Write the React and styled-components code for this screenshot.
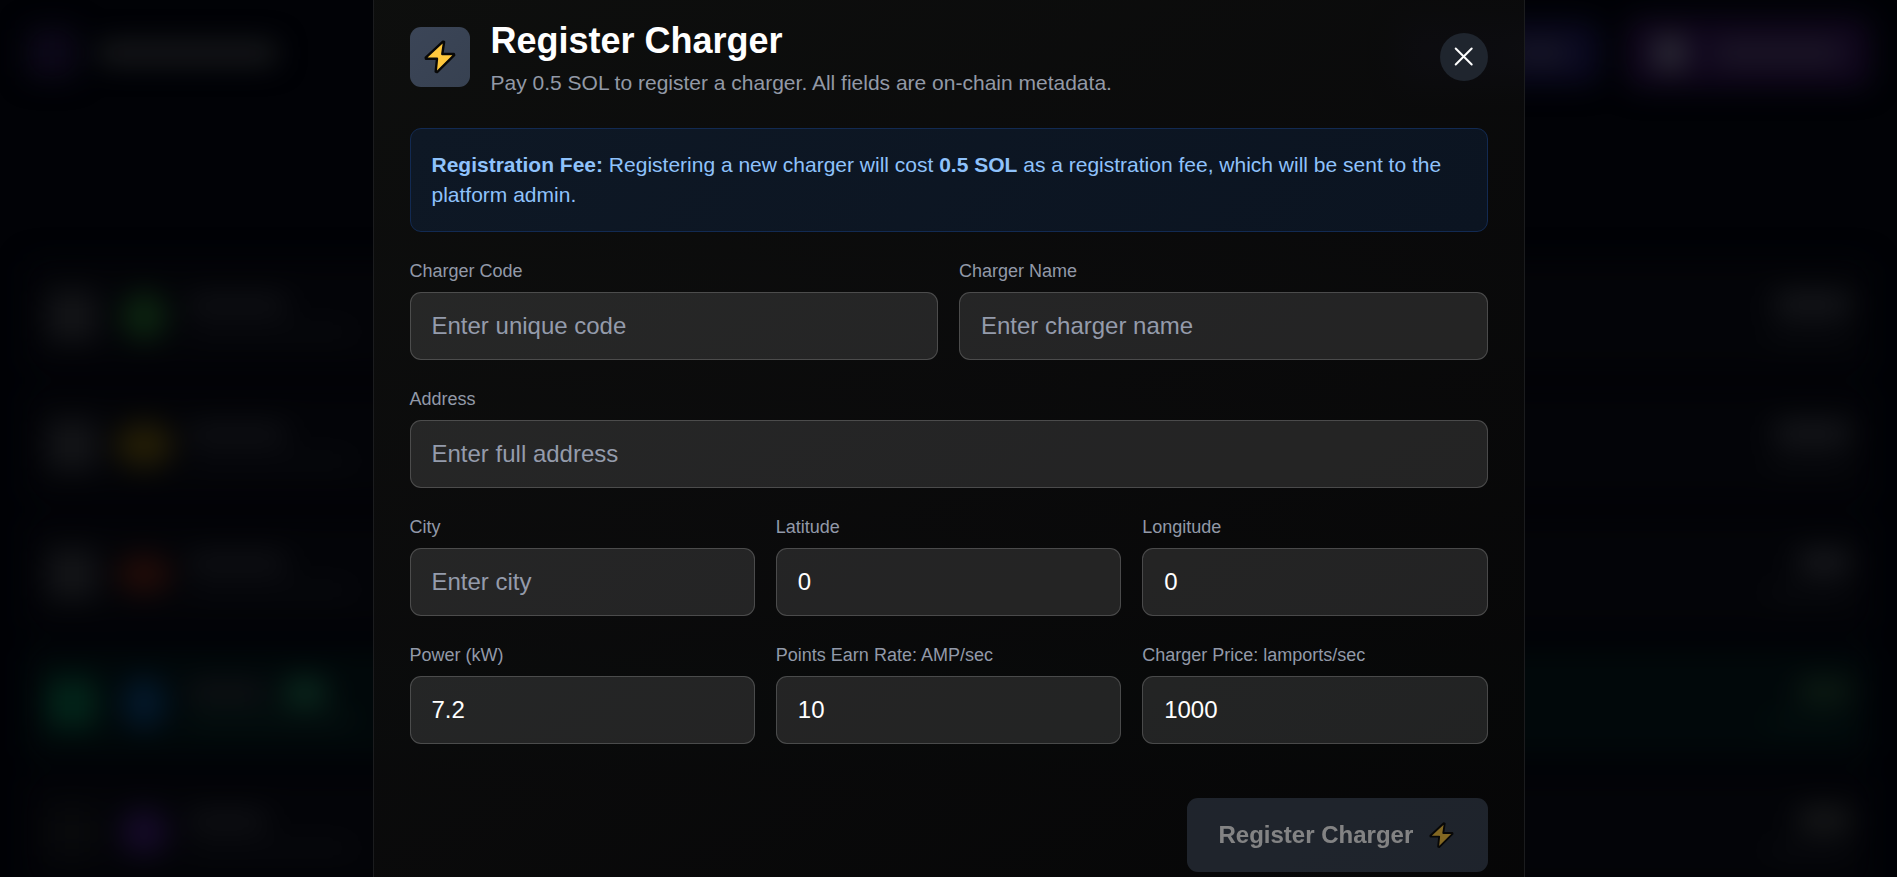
import React from "react";
import styled, { createGlobalStyle } from "styled-components";

const GlobalStyle = createGlobalStyle`
  * { box-sizing: border-box; }
  html, body { margin: 0; height: 100%; overflow: hidden; background: #010206; }
  body, input, button { font-family: "Liberation Sans", Arial, sans-serif; }
  #root { height: 100%; }
`;

const Screen = styled.div`
  display: grid;
  height: 877px;
  overflow: hidden;
  background: #010206;
  & > * { grid-area: 1 / 1; min-height: 0; }
`;

/* Dimmed leaderboard page behind the dialog */
const Backdrop = styled.div`
  display: flex;
  flex-direction: column;
  padding: 17px 27px 0;
  filter: blur(14px);
  overflow: hidden;
`;

const TopBar = styled.div`
  display: flex;
  align-items: center;
  height: 72px;
  flex: none;
  margin-bottom: 171px;
`;

const Blob = styled.div`
  flex: none;
  width: ${(p) => p.$w}px;
  height: ${(p) => p.$h}px;
  border-radius: ${(p) => p.$r ?? 8}px;
  background: ${(p) => p.$c};
  margin-left: ${(p) => p.$ml ?? 0}px;
`;

const AvatarSlot = styled.div`
  display: flex;
  justify-content: center;
  width: 58px;
  margin-left: 18px;
`;

const Spacer = styled.div`
  flex: 1;
`;

const GhostButton = styled.div`
  display: flex;
  align-items: center;
  justify-content: center;
  gap: 28px;
  width: ${(p) => p.$w}px;
  height: ${(p) => p.$h}px;
  margin-left: 26px;
  border-radius: 14px;
  background: ${(p) => p.$c};
`;

const BoardRow = styled.div`
  display: flex;
  align-items: center;
  flex: none;
  height: 112px;
  margin-bottom: 17px;
  padding: 0 20px;
  border-radius: 14px;
  background: ${(p) => p.$c};
`;

const Lines = styled.div`
  display: flex;
  flex-direction: column;
  align-items: ${(p) => (p.$end ? "flex-end" : "flex-start")};
  gap: 13px;
  margin-left: ${(p) => (p.$end ? 0 : 14)}px;
`;

const NameLine = styled.div`
  display: flex;
  align-items: center;
  height: 18px;
`;

/* Dialog */
const Dialog = styled.div`
  z-index: 1;
  justify-self: center;
  width: 1152px;
  height: 960px;
  padding: 13px 36px 0;
  border: solid #1b1c1e;
  border-width: 0 1px;
  background: linear-gradient(150deg, rgba(16, 17, 15, 0.84) 0%, rgba(12, 12, 12, 0.84) 45%, rgba(6, 6, 6, 0.84) 100%);
`;

const Header = styled.header`
  display: flex;
  align-items: center;
  gap: 21px;
  height: 88px;
`;

const IconTile = styled.div`
  display: grid;
  place-items: center;
  width: 60px;
  height: 60px;
  border-radius: 11px;
  background: linear-gradient(135deg, #3b4557, #374151);
`;

const Titles = styled.div`
  flex: 1;
`;

const Title = styled.h2`
  margin: 0;
  color: #fff;
  font-size: 36px;
  line-height: 45px;
  font-weight: 700;
`;

const Subtitle = styled.p`
  margin: 4px 0 -2px;
  color: #9299a6;
  font-size: 21px;
  line-height: 32px;
`;

const CloseButton = styled.button`
  display: grid;
  place-items: center;
  width: 48px;
  height: 48px;
  padding: 0;
  border: 0;
  border-radius: 50%;
  background: #1f252e;
`;

const Notice = styled.div`
  height: 104px;
  margin-top: 27px;
  padding: 21px;
  border: 1px solid #122a52;
  border-radius: 11px;
  background: linear-gradient(135deg, #0e1825, #0b1421);
  color: #8fc2fb;
  font-size: 21px;
  line-height: 30px;
`;

const Form = styled.form`
  display: flex;
  flex-direction: column;
  gap: 26px;
  margin-top: 26px;
`;

const Row = styled.div`
  display: grid;
  grid-template-columns: repeat(${(p) => p.$cols}, 1fr);
  gap: 21px;
`;

const Field = styled.label`
  display: flex;
  flex-direction: column;
  gap: 7px;
  min-width: 0;
  color: #9299a8;
  font-size: 18px;
  line-height: 27px;
`;

const Input = styled.input`
  width: 100%;
  height: 68px;
  padding: 0 21px;
  border: 1px solid rgba(255, 255, 255, 0.18);
  border-radius: 11px;
  outline: 0;
  background: rgba(255, 255, 255, 0.11);
  color: #fff;
  font-size: 24px;
  &::placeholder { color: #949bab; opacity: 1; }
`;

const Actions = styled.div`
  display: flex;
  justify-content: flex-end;
  margin-top: 28px;
`;

const SubmitButton = styled.button`
  display: flex;
  align-items: center;
  justify-content: space-between;
  width: 301px;
  height: 74px;
  padding: 0 34px 0 32px;
  border: 0;
  border-radius: 11px;
  background: #374151;
  color: #fff;
  font-size: 24px;
  font-weight: 700;
  opacity: 0.5;
`;

const Bolt = ({ width }) => (
  <svg width={width} height={(width * 34) / 32} viewBox="0 0 32 34">
    <path
      d="M18.9 1.6 L1.7 17.6 L1.9 18.7 H13 L11.7 31.6 L13.1 32.1 L30.2 15.2 L29.9 14 H18.3 L20.1 2 Z"
      fill="#ffc83d"
      stroke="#080808"
      strokeWidth="2.4"
      strokeLinejoin="round"
    />
  </svg>
);

const board = [
  { rank: "#131417", avatar: "#0c2410", aw: 46, ah: 48, w: 100, row: "#030408", score: "#16171b", sw: 76 },
  { rank: "#131417", avatar: "#231d06", aw: 58, ah: 44, w: 100, row: "#030408", score: "#16171b", sw: 76 },
  { rank: "#131417", avatar: "#220c08", aw: 54, ah: 38, w: 100, row: "#030408", score: "#18191d", sw: 52 },
  { rank: "#022419", avatar: "#03182a", aw: 44, ah: 52, w: 80, row: "#01080a", score: "#0d1c13", sw: 52, you: true },
  { rank: "#08090b", avatar: "#150a28", aw: 48, ah: 46, w: 80, row: "#030408", score: "#18191a", sw: 52 },
];

const fields = [
  [
    { label: "Charger Code", placeholder: "Enter unique code" },
    { label: "Charger Name", placeholder: "Enter charger name" },
  ],
  [{ label: "Address", placeholder: "Enter full address" }],
  [
    { label: "City", placeholder: "Enter city" },
    { label: "Latitude", value: "0" },
    { label: "Longitude", value: "0" },
  ],
  [
    { label: "Power (kW)", value: "7.2" },
    { label: "Points Earn Rate: AMP/sec", value: "10" },
    { label: "Charger Price: lamports/sec", value: "1000" },
  ],
];

export default function App() {
  return (
    <>
      <GlobalStyle />
      <Screen>
        <Backdrop aria-hidden="true">
          <TopBar>
            <Blob $w={50} $h={50} $c="#0c0819" />
            <Blob $w={180} $h={22} $ml={20} $c="#191a1d" />
            <Spacer />
            <GhostButton $w={200} $h={62} $c="#0a0920">
              <Blob $w={54} $h={20} $ml={80} $c="#191826" />
            </GhostButton>
            <GhostButton $w={244} $h={70} $c="#10071d">
              <Blob $w={32} $h={34} $c="#2b2a34" />
              <Blob $w={128} $h={22} $c="#1c1726" />
            </GhostButton>
          </TopBar>
          {board.map((b, i) => (
            <BoardRow key={i} $c={b.row}>
              <Blob $w={50} $h={50} $c={b.rank} />
              <AvatarSlot>
                <Blob $w={b.aw} $h={b.ah} $r={22} $c={b.avatar} />
              </AvatarSlot>
              <Lines>
                <NameLine>
                  <Blob $w={b.w} $h={17} $c="#121317" />
                  {b.you && <Blob $w={44} $h={28} $ml={16} $c="#0a281d" />}
                </NameLine>
                <Blob $w={166} $h={10} $c={b.you ? "#061512" : "#0a0b0f"} />
              </Lines>
              <Spacer />
              <Lines $end>
                <Blob $w={b.sw} $h={24} $c={b.score} />
                <Blob $w={84} $h={12} $c={b.you ? "#03110f" : "#0a0b0f"} />
              </Lines>
            </BoardRow>
          ))}
        </Backdrop>

        <Dialog role="dialog" aria-label="Register Charger">
          <Header>
            <IconTile>
              <Bolt width={32} />
            </IconTile>
            <Titles>
              <Title>Register Charger</Title>
              <Subtitle>Pay 0.5 SOL to register a charger. All fields are on-chain metadata.</Subtitle>
            </Titles>
            <CloseButton aria-label="Close">
              <svg width="20" height="20" viewBox="0 0 20 20">
                <path d="M1.7 1.5 L17.7 17.5 M17.7 1.5 L1.7 17.5" stroke="#fff" strokeWidth="2" strokeLinecap="round" />
              </svg>
            </CloseButton>
          </Header>

          <Notice>
            <strong>Registration Fee:</strong> Registering a new charger will cost <strong>0.5 SOL</strong> as a
            registration fee, which will be sent to the platform admin.
          </Notice>

          <Form>
            {fields.map((row, i) => (
              <Row key={i} $cols={row.length}>
                {row.map((f) => (
                  <Field key={f.label}>
                    {f.label}
                    <Input placeholder={f.placeholder} defaultValue={f.value} />
                  </Field>
                ))}
              </Row>
            ))}
            <Actions>
              <SubmitButton type="button" disabled>
                Register Charger
                <Bolt width={25} />
              </SubmitButton>
            </Actions>
          </Form>
        </Dialog>
      </Screen>
    </>
  );
}
